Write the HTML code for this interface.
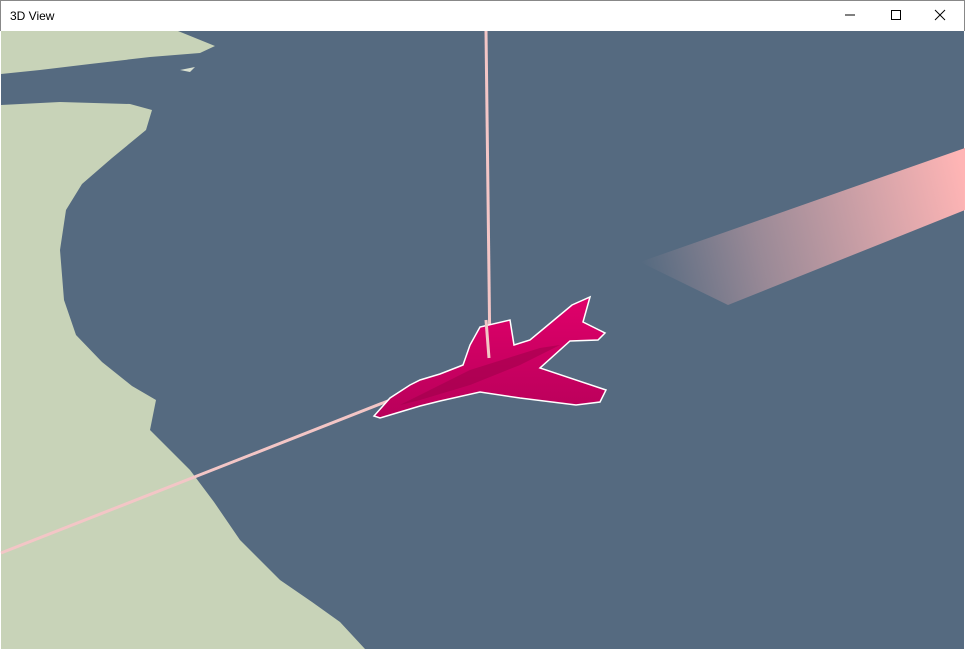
<!DOCTYPE html>
<html><head><style>
html,body{margin:0;padding:0;width:965px;height:649px;overflow:hidden;background:#fff;font-family:"Liberation Sans",sans-serif}
.tb{position:absolute;left:0;top:0;width:963px;height:30px;border:1px solid #888;border-bottom:none;background:#fff}
.t{position:absolute;left:9px;top:8px;font-size:12px;color:#000}
svg{position:absolute;left:0;top:0}
</style></head><body>
<div class="tb"><span class="t">3D View</span></div>
<svg width="965" height="649" viewBox="0 0 965 649">
<defs>
<linearGradient id="bm" x1="640" y1="260" x2="965" y2="180" gradientUnits="userSpaceOnUse">
<stop offset="0" stop-color="#ffb8b8" stop-opacity="0"/><stop offset="0.35" stop-color="#ffb8b8" stop-opacity="0.4"/><stop offset="1" stop-color="#ffb5b5"/>
</linearGradient>
<linearGradient id="pl" x1="0" y1="0" x2="0" y2="1"><stop offset="0" stop-color="#e0006a"/><stop offset="1" stop-color="#b8005a"/></linearGradient>
</defs>
<rect x="1" y="31" width="963" height="618" fill="#556a80"/>
<polygon fill="#c8d3b8" points="1,31 178,31 215,46 200,53 150,57 90,64 40,70 1,74"/>
<polygon fill="#d9e0d0" points="180,70 195,67 190,72"/>
<polygon fill="#c8d3b8" points="1,105 60,102 130,104 152,110 146,130 112,158 82,184 66,210 60,250 64,300 76,335 102,362 132,386 156,400 150,430 190,470 214,502 240,540 280,580 312,602 340,622 365,649 1,649"/>
<polygon fill="url(#bm)" points="640,262 965,148 965,210 728,305"/>
<line x1="486" y1="31" x2="490" y2="360" stroke="#f3c6c6" stroke-width="3"/>
<line x1="1" y1="553" x2="398" y2="397" stroke="#f3c6c6" stroke-width="3"/>
<path d="M374,416 L390,398 L410,385 L420,380 L440,374 L463,365 L470,345 L480,327 L510,320 L514,345 L530,340 L548,325 L572,305 L590,297 L583,322 L605,333 L598,340 L570,341 L540,368 L606,390 L600,402 L576,405 L520,398 L480,392 L440,401 L420,406 L380,418 Z" fill="url(#pl)" stroke="#fff" stroke-width="1.5"/>
<path d="M400,405 L470,370 L540,348 L560,345 L520,365 L470,385 L420,400 Z" fill="#9a0048" opacity="0.5"/>
<line x1="486" y1="320" x2="489" y2="358" stroke="#f3c6c6" stroke-width="3"/>
</svg>
<div style="position:absolute;right:0;top:0;width:140px;height:30px">
<svg width="140" height="30" style="position:absolute;left:0;top:0">
<line x1="20" y1="15" x2="30" y2="15" stroke="#000"/>
<rect x="66.5" y="10.5" width="9" height="9" fill="none" stroke="#000"/>
<line x1="110" y1="10" x2="120" y2="20" stroke="#000"/><line x1="120" y1="10" x2="110" y2="20" stroke="#000"/>
</svg></div>
</body></html>
